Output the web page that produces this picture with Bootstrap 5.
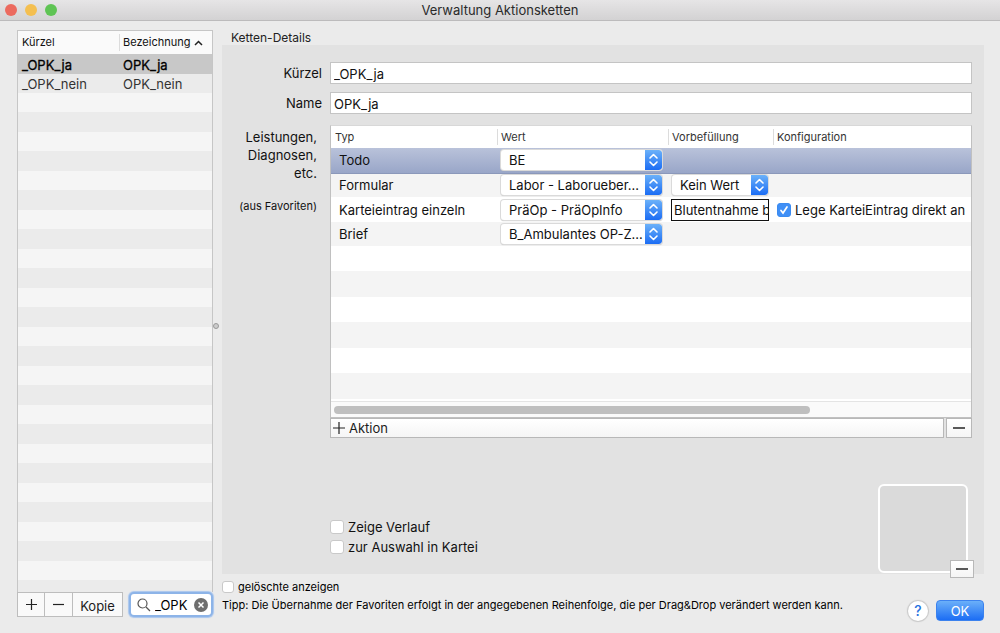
<!DOCTYPE html>
<html lang="de">
<head>
<meta charset="utf-8">
<meta name="viewport" content="width=device-width, initial-scale=1">
<title>Verwaltung Aktionsketten</title>
<link href="https://cdn.jsdelivr.net/npm/bootstrap@5.3.0/dist/css/bootstrap.min.css" rel="stylesheet">
<style>
  body { font-family: Inter, "Liberation Sans", sans-serif; font-size: 13px; line-height: 18px; color: #111; background: #ebebeb; }
  .titlebar { height: 21px; background: linear-gradient(#e6e5e6, #d3d2d3); border-bottom: 1px solid #bcbbbc; padding-left: 5px; }
  .titlebar h1 { font-size: 13px; line-height: 18px; font-weight: 400; color: #2a2a2a; }
  .light { width: 12px; height: 12px; border-radius: 50%; }
  .light-red { background: #ec6a5f; } .light-yellow { background: #f4bf50; } .light-green { background: #5fc454; }

  .workspace { padding: 9px 16px 12px 17px; }
  .sidebar { width: 196px; flex: none; }
  .chain-list { border: 1px solid #c6c6c6; border-bottom: 0; background: #f5f5f5; }
  table { table-layout: fixed; width: 100%; }
  th { font-weight: 400; font-size: 11px; white-space: nowrap; position: relative; }
  th + th::before { content: ""; position: absolute; left: 0; top: 3px; bottom: 3px; width: 1px; background: #dcdcdc; }
  td { white-space: nowrap; }
  .chain-list th { height: 23px; padding: 0 4px 2px; background: #fafafa; }
  .chain-list td { height: 19px; line-height: 18px; padding: 1px 4px 0; background: #ebebeb; color: #333; }
  .chain-list .picked td { height: 20px; padding-top: 2px; background: #c8c8c8; color: #000; -webkit-text-stroke: .3px #000; }
  .chain-fill { background: linear-gradient(#f5f5f5 50%, #ebebeb 50%) 0 0 / 100% 39px; }
  .tool { height: 25px; border: 1px solid #bdbdbd; background: #f9f9f9; padding: 0; color: #1c1c1c; display: flex; align-items: center; justify-content: center; }
  .tool + .tool { border-left: 0; }
  .tool-icon { width: 28px; } .tool-text { width: 50px; padding-top: 2px; }
  .search { width: 84px; height: 25px; border: 2px solid #8db4e8; border-radius: 5px; background: #fff; box-shadow: 0 0 1px 1px #a9c6ee; padding: 0 3px 0 6px; }
  .search input { width: 0; border: 0; outline: 0; padding: 0 0 0 4px; background: none; }
  .clear { border: 0; background: none; padding: 0; display: flex; }
  .splitter { width: 9px; flex: none; }
  .knob { width: 6px; height: 6px; border-radius: 50%; border: 1px solid #999; background: #ccc; }

  .legend-line { font-size: 12px; line-height: 15px; padding-left: 9px; color: #222; }
  .details { background: #e2e2e2; padding: 17px 12px 0 0; }
  .form-line { display: grid; grid-template-columns: 100px minmax(0, 1fr); column-gap: 8px; }
  .form-line > label, .side-label { text-align: right; line-height: 22px; }
  .field { height: 22px; border: 1px solid #c4c4c4; background: #fff; padding: 1px 3px 0; outline: 0; width: 100%; color: #111; }
  .contents { padding-top: 3px; }
  .side-label { line-height: 18px; padding: 3px 5px 0 0; }
  .small-note { font-size: 11px; margin-top: 15px; }

  .actions { border: 1px solid #c0c0c0; border-top-color: #d8d8d8; background: #fff; }
  .actions th { height: 22px; padding: 0 4px; color: #333; }
  .actions td { height: 25px; padding: 0 4px; background: #fff; }
  .actions td:first-child { padding-left: 8px; }
  .actions tr:nth-child(even) td { height: 24px; background: #f4f4f4; }
  .actions .picked td { background: linear-gradient(#b9c2da, #99a6c8); border-bottom: 1px solid #8b98ba; }
  .actions-fill { height: 155px; background: linear-gradient(#fff 50%, #f4f4f4 50%) 0 0 / 100% 51px; }
  .popup { display: block; appearance: none; width: 161px; height: 20px; border: 0; border-radius: 3px; padding: 0 17px 0 8px; color: #111; line-height: 20px; outline: 0; box-shadow: 0 0 0 1px #dadada, 0 1px 1px #aaa;
    background: #fff url("data:image/svg+xml,%3Csvg xmlns='http://www.w3.org/2000/svg' width='17' height='20'%3E%3Cdefs%3E%3ClinearGradient id='g' x2='0' y2='1'%3E%3Cstop stop-color='%236bb1f9'/%3E%3Cstop offset='1' stop-color='%231c6df4'/%3E%3C/linearGradient%3E%3C/defs%3E%3Cpath d='M0 0h14a3 3 0 0 1 3 3v14a3 3 0 0 1-3 3H0z' fill='url(%23g)'/%3E%3Cpath d='M5 8l3.5-3.5L12 8M5 12l3.5 3.5L12 12' fill='none' stroke='%23fff' stroke-width='1.6' stroke-linecap='round' stroke-linejoin='round'/%3E%3C/svg%3E") no-repeat right center; }
  .popup-narrow { width: 96px; }
  .prefill { display: block; width: 98px; height: 22px; border: 1px solid #111; padding: 0 0 0 2px; background: #fff; outline: 0; margin-left: -1px; color: #111; }
  .scroll-track { height: 16px; border-top: 1px solid #e4e4e4; background: #fafafa; padding: 4px 3px 0; }
  .scroll-thumb { height: 8px; width: 75%; border-radius: 4px; background: #bfbfbf; }
  .bar-btn { height: 20px; border: 1px solid #b8b8b8; background: linear-gradient(#fff, #f5f5f5); padding: 0; color: #1c1c1c; }
  .add-btn { padding-left: 2px; gap: 4px; }
  .minus-btn { width: 26px; margin-left: 2px; }

  .tick { appearance: none; margin: 0; width: 14px; height: 14px; border: 1px solid #c9c9c9; border-radius: 3px; background: #fff; flex: none; }
  .tick-small { width: 12px; height: 12px; }
  .tick:checked { border-color: #3b8bf0; background: #3f8ff6 url("data:image/svg+xml,%3Csvg xmlns='http://www.w3.org/2000/svg' viewBox='0 0 12 12'%3E%3Cpath d='M3 6.5l2 2.500L9 3' fill='none' stroke='%23fff' stroke-width='1.700' stroke-linecap='round'/%3E%3C/svg%3E"); }
  .option-list { display: grid; gap: 2px; padding-bottom: 18px; }
  .preview { width: 90px; height: 89px; border: 2px solid #fff; border-radius: 6px; background: #dadada; margin: 0 4px 1px 0; }
  .preview button { position: absolute; right: -8px; bottom: -7px; width: 24px; height: 18px; }
  .footer-line { padding-top: 5px; }
  .footer-text { font-size: 11px; line-height: 16px; color: #000; display: grid; gap: 2px; }
  .help { width: 20px; height: 20px; border: 0; border-radius: 50%; background: #fff; box-shadow: 0 0 1px 1px #c8c8c8; color: #2671e0; padding: 0; font-size: 14px; font-weight: 500; line-height: 20px; }
  .ok { width: 48px; height: 21px; border: 1px solid #3c82ee; border-radius: 4px; background: linear-gradient(#6bb0f9, #1c6df4); color: #fff; padding: 0; line-height: 18px; }
</style>
</head>
<body class="min-vh-100 d-flex flex-column">
<header class="titlebar position-relative d-flex align-items-center gap-2">
  <span class="light light-red"></span><span class="light light-yellow"></span><span class="light light-green"></span>
  <h1 class="position-absolute start-0 end-0 text-center m-0">Verwaltung Aktionsketten</h1>
</header>

<main class="workspace flex-grow-1 d-flex">
  <aside class="sidebar d-flex flex-column pb-1">
    <div class="chain-list flex-grow-1 d-flex flex-column">
      <table>
        <colgroup><col style="width:101px"><col></colgroup>
        <thead><tr><th>Kürzel</th><th>Bezeichnung <svg width="9" height="6" viewBox="0 0 9 6" fill="none" stroke="#222" stroke-width="1.5"><path d="M1 5l3.500-3.500L8 5"/></svg></th></tr></thead>
        <tbody>
          <tr class="picked"><td>_OPK_ja</td><td>OPK_ja</td></tr>
          <tr><td>_OPK_nein</td><td>OPK_nein</td></tr>
        </tbody>
      </table>
      <div class="chain-fill flex-grow-1"></div>
    </div>
    <div class="d-flex justify-content-between">
      <div class="d-flex">
        <button class="tool tool-icon" aria-label="Hinzufügen"><svg width="13" height="13" stroke="#222" stroke-width="1.2"><path d="M6.500 1v11M1 6.500h11"/></svg></button>
        <button class="tool tool-icon" aria-label="Entfernen"><svg width="13" height="13" stroke="#222" stroke-width="1.2"><path d="M1 6.500h11"/></svg></button>
        <button class="tool tool-text">Kopie</button>
      </div>
      <div class="search d-flex align-items-center">
        <svg width="14" height="14" fill="none" stroke="#555" stroke-width="1.2"><circle cx="5.500" cy="5.500" r="4.500"/><path d="M9 9l4 4"/></svg>
        <input class="flex-grow-1" type="text" value="_OPK" aria-label="Suche">
        <button class="clear" aria-label="Suche leeren"><svg width="14" height="14"><circle cx="7" cy="7" r="7" fill="#6e6e6e"/><path d="M4.500 4.500l5 5M9.500 4.500l-5 5" stroke="#fff" stroke-width="1.500"/></svg></button>
      </div>
    </div>
  </aside>
  <div class="splitter d-flex align-items-center"><span class="knob ms-px"></span></div>

  <section class="flex-grow-1 d-flex flex-column">
    <div class="legend-line">Ketten-Details</div>
    <div class="details flex-grow-1 d-flex flex-column">
      <div class="form-line mb-2"><label for="kuerzel">Kürzel</label><input class="field" id="kuerzel" type="text" value="_OPK_ja"></div>
      <div class="form-line mb-2"><label for="name">Name</label><input class="field" id="name" type="text" value="OPK_ja"></div>
      <div class="form-line contents">
        <div class="side-label">Leistungen,<br>Diagnosen,<br>etc.<div class="small-note">(aus Favoriten)</div></div>
        <div>
          <div class="actions">
            <table>
              <colgroup><col style="width:166px"><col style="width:171px"><col style="width:105px"><col></colgroup>
              <thead><tr><th>Typ</th><th>Wert</th><th>Vorbefüllung</th><th>Konfiguration</th></tr></thead>
              <tbody>
                <tr class="picked"><td>Todo</td><td><select class="popup" aria-label="Wert Todo"><option>BE</option></select></td><td></td><td></td></tr>
                <tr><td>Formular</td><td><select class="popup" aria-label="Wert Formular"><option>Labor - Laborueber...</option></select></td><td><select class="popup popup-narrow" aria-label="Vorbefüllung Formular"><option>Kein Wert</option></select></td><td></td></tr>
                <tr><td>Karteieintrag einzeln</td><td><select class="popup" aria-label="Wert Karteieintrag"><option>PräOp - PräOpInfo</option></select></td><td><input class="prefill" type="text" value="Blutentnahme bei" aria-label="Vorbefüllung Karteieintrag"></td><td><label class="d-flex align-items-center gap-1"><input class="tick" type="checkbox" checked>Lege KarteiEintrag direkt an</label></td></tr>
                <tr><td>Brief</td><td><select class="popup" aria-label="Wert Brief"><option>B_Ambulantes OP-Z...</option></select></td><td></td><td></td></tr>
              </tbody>
            </table>
            <div class="actions-fill"></div>
            <div class="scroll-track"><div class="scroll-thumb"></div></div>
          </div>
          <div class="d-flex">
            <button class="bar-btn add-btn flex-grow-1 d-flex align-items-center"><svg width="12" height="12" stroke="#222" stroke-width="1.200"><path d="M6 0v12M0 6h12"/></svg>Aktion</button>
            <button class="bar-btn minus-btn d-flex align-items-center justify-content-center" aria-label="Aktion entfernen"><svg width="12" height="2"><path d="M0 1h12" stroke="#222" stroke-width="1.500"/></svg></button>
          </div>
        </div>
      </div>
      <div class="form-line mt-auto">
        <div></div>
        <div class="d-flex justify-content-between align-items-end">
          <div class="option-list">
            <label class="d-flex align-items-center gap-1"><input class="tick" type="checkbox">Zeige Verlauf</label>
            <label class="d-flex align-items-center gap-1"><input class="tick" type="checkbox">zur Auswahl in Kartei</label>
          </div>
          <div class="preview position-relative"><button class="bar-btn d-flex align-items-center justify-content-center" aria-label="Bild entfernen"><svg width="12" height="2"><path d="M0 1h12" stroke="#222" stroke-width="1.500"/></svg></button></div>
        </div>
      </div>
    </div>
    <footer class="footer-line d-flex justify-content-between align-items-end">
      <div class="footer-text pb-2">
        <label class="d-flex align-items-center gap-1"><input class="tick tick-small" type="checkbox">gelöschte anzeigen</label>
        <div>Tipp: Die Übernahme der Favoriten erfolgt in der angegebenen Reihenfolge, die per Drag&amp;Drop verändert werden kann.</div>
      </div>
      <div class="d-flex gap-2 align-items-center"><button class="help" aria-label="Hilfe">?</button><button class="ok">OK</button></div>
    </footer>
  </section>
</main>
<script src="https://cdn.jsdelivr.net/npm/bootstrap@5.3.0/dist/js/bootstrap.bundle.min.js"></script>
</body>
</html>
